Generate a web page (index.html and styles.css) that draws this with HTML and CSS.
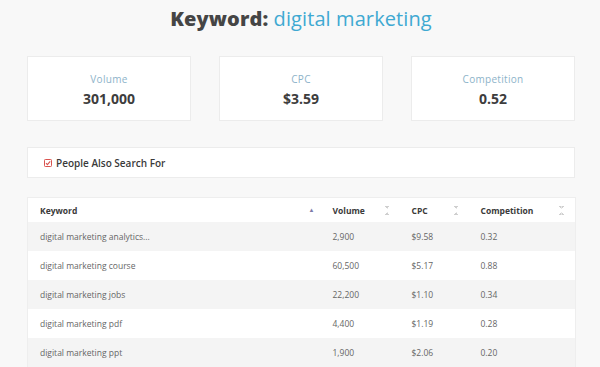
FILE: index.html
```html
<!DOCTYPE html>
<html lang="en">
<head>
<meta charset="utf-8">
<title>Keyword: digital marketing</title>
<link rel="stylesheet" href="styles.css">
</head>
<body>
<div class="page">
  <h1 class="title"><span class="title-key">Keyword:</span> <span class="title-term">digital marketing</span></h1>

  <div class="cards">
    <div class="card">
      <div class="card-label">Volume</div>
      <div class="card-value">301,000</div>
    </div>
    <div class="card">
      <div class="card-label">CPC</div>
      <div class="card-value">$3.59</div>
    </div>
    <div class="card">
      <div class="card-label">Competition</div>
      <div class="card-value">0.52</div>
    </div>
  </div>

  <div class="pasf">
    <svg class="pasf-icon" width="8" height="8" viewBox="0 0 8 8">
      <rect x="0.5" y="0.5" width="7" height="7" rx="0.8" fill="none" stroke="#d9534f" stroke-width="1"/>
      <path d="M2 4.2 L3.4 5.6 L6.2 2.4" fill="none" stroke="#d9534f" stroke-width="1.1"/>
    </svg>
    <span class="pasf-text">People Also Search For</span>
  </div>

  <table class="kw-table">
    <colgroup>
      <col class="c1"><col class="c2"><col class="c3"><col class="c4">
    </colgroup>
    <thead>
      <tr>
        <th class="th-kw"><div class="th-inner"><span>Keyword</span><span class="sort-up">&#9650;</span></div></th>
        <th class="th-vol"><div class="th-inner"><span>Volume</span><span class="sort-both"></span></div></th>
        <th class="th-cpc"><div class="th-inner"><span>CPC</span><span class="sort-both"></span></div></th>
        <th class="th-comp"><div class="th-inner"><span>Competition</span><span class="sort-both"></span></div></th>
      </tr>
    </thead>
    <tbody>
      <tr><td class="td-kw">digital marketing analytics...</td><td>2,900</td><td>$9.58</td><td>0.32</td></tr>
      <tr><td class="td-kw">digital marketing course</td><td>60,500</td><td>$5.17</td><td>0.88</td></tr>
      <tr><td class="td-kw">digital marketing jobs</td><td>22,200</td><td>$1.10</td><td>0.34</td></tr>
      <tr><td class="td-kw">digital marketing pdf</td><td>4,400</td><td>$1.19</td><td>0.28</td></tr>
      <tr><td class="td-kw">digital marketing ppt</td><td>1,900</td><td>$2.06</td><td>0.20</td></tr>
    </tbody>
  </table>
</div>
</body>
</html>
```
FILE: styles.css
```css
html, body {
  margin: 0;
  padding: 0;
  background: #f8f8f8;
  font-family: "Open Sans", "Liberation Sans", sans-serif;
  color: #444;
}

.page {
  padding: 0 25px 0 27px;
}

.title {
  margin: 0;
  height: 38px;
  line-height: 37px;
  text-align: center;
  font-size: 20px;
  font-weight: 800;
  letter-spacing: 0.1px;
}

.title-key {
  color: #454545;
}

.title-term {
  color: #3fa9d2;
  font-weight: 400;
}

.cards {
  margin-top: 18px;
  display: grid;
  grid-template-columns: 164px 164px 164px;
  justify-content: space-between;
}

.card {
  height: 65px;
  box-sizing: border-box;
  background: #fff;
  border: 1px solid #ececec;
  display: flex;
  flex-direction: column;
  align-items: center;
  padding-top: 15px;
}

.card-label {
  font-size: 10px;
  line-height: 14px;
  color: #8db3c9;
  letter-spacing: 0.3px;
}

.card-value {
  margin-top: 4px;
  font-size: 14px;
  line-height: 18px;
  font-weight: 700;
  color: #3d3d3d;
}

.pasf {
  margin-top: 26px;
  height: 31px;
  box-sizing: border-box;
  background: #fff;
  border: 1px solid #ececec;
  display: flex;
  align-items: center;
  padding-left: 16px;
  gap: 4px;
}

.pasf-icon {
  flex: none;
}

.pasf-text {
  font-size: 10px;
  font-weight: 600;
  color: #3a3a3a;
}

.kw-table {
  margin-top: 19px;
  width: 548px;
  table-layout: fixed;
  border-collapse: collapse;
  background: #fff;
  border: 1px solid #eeeeee;
}

.c1 { width: 305px; }
.c2 { width: 79px; }
.c3 { width: 69px; }
.c4 { width: 95px; }

.kw-table th {
  height: 24px;
  padding: 0;
  text-align: left;
  font-size: 8.5px;
  font-weight: 700;
  color: #3a3a3a;
}

.th-inner {
  display: flex;
  justify-content: space-between;
  align-items: center;
  padding-right: 22px;
}

.th-kw .th-inner { padding-left: 12px; padding-right: 18px; }
.th-comp .th-inner { padding-right: 11px; }

.sort-up {
  font-size: 6px;
  color: #7e7aa8;
}

.sort-both {
  width: 5px;
  height: 9px;
  background:
    linear-gradient(to top right, transparent 50%, #cfcfcf 50%) 0 0 / 50% 3px no-repeat,
    linear-gradient(to top left, transparent 50%, #cfcfcf 50%) 100% 0 / 50% 3px no-repeat,
    linear-gradient(to bottom right, transparent 50%, #cfcfcf 50%) 0 100% / 50% 3px no-repeat,
    linear-gradient(to bottom left, transparent 50%, #cfcfcf 50%) 100% 100% / 50% 3px no-repeat;
}

.kw-table td {
  height: 29px;
  padding: 0;
  font-size: 8.5px;
  color: #666;
}

.kw-table td.td-kw {
  padding-left: 12px;
}

.kw-table tbody tr:nth-child(odd) {
  background: #f4f4f4;
}
```
